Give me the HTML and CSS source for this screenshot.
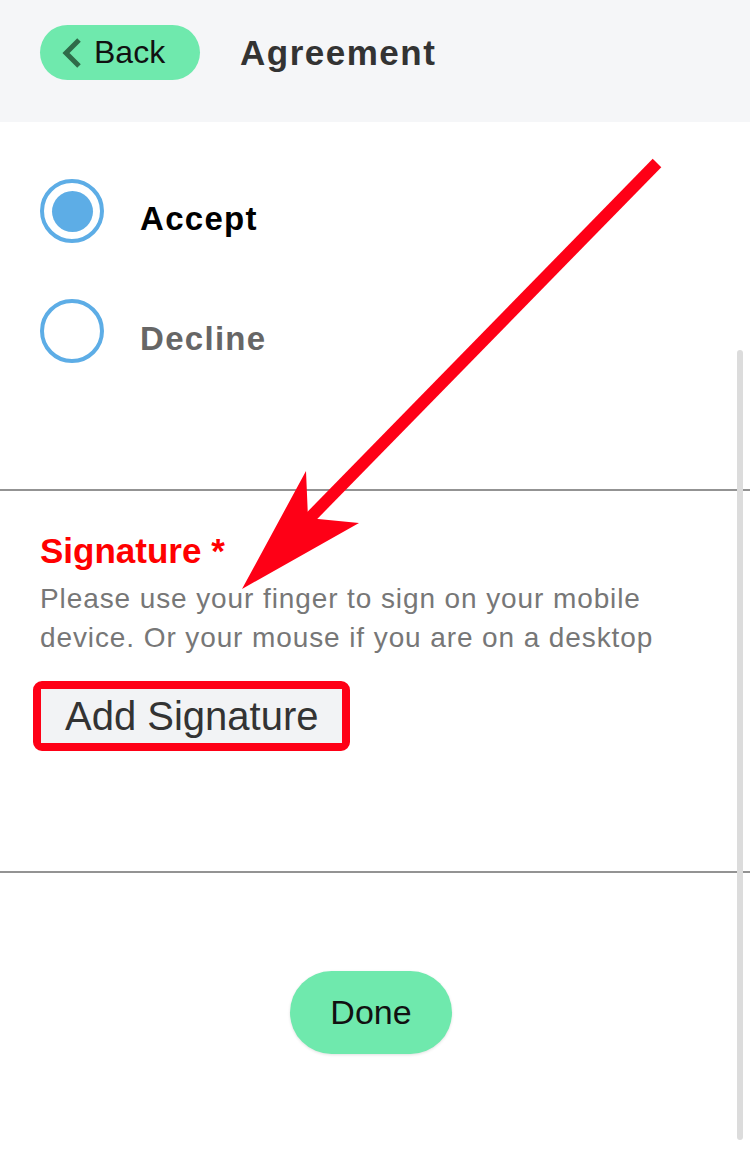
FILE: index.html
```html
<!DOCTYPE html>
<html>
<head>
    <title>Agreement</title>
    <link rel="stylesheet" href="styles.css">
</head>
<body>
    <div class="page">
        <div class="topbar">
            <button class="back-btn">
                <svg class="chevron" width="22" height="32" viewBox="0 0 22 32">
                    <path d="M18 3 L5 16 L18 29" fill="none" stroke="#2f6b49" stroke-width="5"/>
                </svg>
                Back
            </button>
            <h1 class="title">Agreement</h1>
        </div>

        <div class="options">
            <label class="option">
                <span class="radio checked"><span class="dot"></span></span>
                <span class="option-label selected">Accept</span>
            </label>
            <label class="option">
                <span class="radio"></span>
                <span class="option-label">Decline</span>
            </label>
        </div>

        <hr class="divider">

        <div class="signature">
            <div class="sig-title">Signature *</div>
            <p class="sig-help">Please use your finger to sign on your mobile device. Or your mouse if you are on a desktop</p>
            <div class="sig-mark">
                <button class="sig-btn">Add Signature</button>
            </div>
        </div>

        <hr class="divider">

        <div class="footer">
            <button class="done-btn">Done</button>
        </div>

        <div class="scrollbar"></div>

        <!-- pointer drawn over the form -->
        <svg class="pointer" width="750" height="1157" viewBox="0 0 750 1157">
            <line x1="657" y1="163" x2="300" y2="528" stroke="#fe0016" stroke-width="12"/>
            <polygon points="242,589 306,471 308,518 359,523" fill="#fe0016"/>
        </svg>
    </div>
</body>
</html>
```

FILE: styles.css
```css
body { margin: 0; font-family: "Liberation Sans", Arial, sans-serif; background: #fff; }
.page { position: relative; width: 750px; height: 1157px; overflow: hidden; }

.topbar { height: 122px; box-sizing: border-box; padding: 25px 40px 0; background: #f5f6f8; display: flex; align-items: flex-start; gap: 40px; }
.back-btn { width: 160px; height: 55px; border: none; border-radius: 28px; background: #6fe9ad; display: flex; align-items: center; padding: 0 0 0 21px; gap: 11px; font-family: inherit; font-size: 32px; color: #111; }
.chevron { display: block; margin-top: 1px; }
.title { margin: 0; height: 55px; line-height: 55px; font-size: 35px; font-weight: bold; color: #333; letter-spacing: 1.5px; }

.options { padding: 57px 40px 0; display: flex; flex-direction: column; gap: 56px; height: 367px; box-sizing: border-box; }
.option { display: flex; align-items: center; gap: 36px; }
.radio { width: 64px; height: 64px; box-sizing: border-box; border: 4px solid #5dade6; border-radius: 50%; display: flex; align-items: center; justify-content: center; }
.dot { width: 41px; height: 41px; border-radius: 50%; background: #5dade6; }
.option-label { margin-top: 16px; font-size: 33px; font-weight: bold; color: #666; letter-spacing: 1.3px; }
.option-label.selected { color: #000; }

.divider { margin: 0; border: none; height: 2px; background: #939393; }

.signature { padding: 40px 40px 0; height: 380px; box-sizing: border-box; }
.sig-title { font-size: 35px; line-height: 40px; font-weight: bold; color: #ff0000; }
.sig-help { margin: 8px 0 0; font-size: 28px; line-height: 39px; color: #777; letter-spacing: 0.9px; width: 670px; }
.sig-mark { display: inline-block; margin: 24px 0 0 -7px; border: 8px solid #fe0016; border-radius: 9px; }
.sig-btn { display: block; width: 301px; height: 54px; border: none; background: #f2f3f5; font-family: inherit; font-size: 40px; color: #333; padding: 0 0 0 24px; text-align: left; }

.footer { display: flex; justify-content: center; padding: 98px 8px 0 0; }
.done-btn { width: 162px; height: 83px; border: none; border-radius: 42px; background: #6fe9ad; font-family: inherit; font-size: 34px; color: #111; box-shadow: 0 1px 3px rgba(0,0,0,0.12); }

.scrollbar { position: absolute; left: 737px; top: 350px; width: 6px; height: 790px; border-radius: 3px; background: #dcdcdc; }
.pointer { position: absolute; left: 0; top: 0; }
```
